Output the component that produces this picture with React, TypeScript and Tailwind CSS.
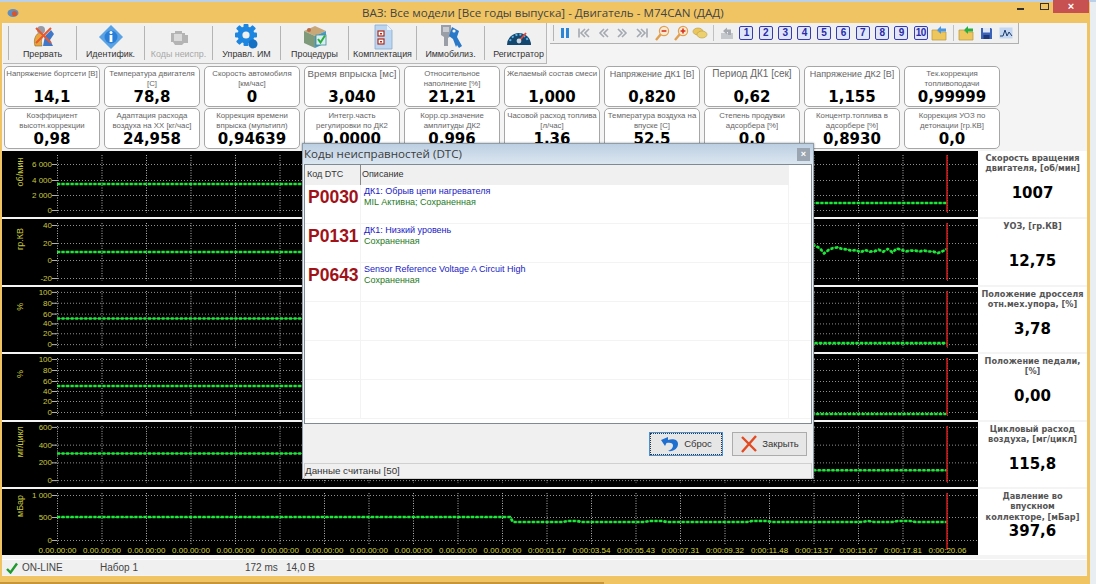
import React from 'react';

// one row of the chart stack: y ticks, unit and the trace as [x, y] points
interface ChartDef {
  unit: string;
  unitY: number;
  ticks: [string, number][];
  trace: [number, number][];
  title: string[];
  value: string;
}

const wave = [305, 312, 328, 318, 312, 310, 315, 316, 320, 318, 325, 318, 323, 322, 317, 323, 315, 325, 313, 318, 322, 320, 320, 322, 320, 322, 323, 327, 322, 315];

const charts: ChartDef[] = [
  {
    unit: 'об/мин', unitY: 21,
    ticks: [['6 000', 13], ['4 000', 29], ['2 000', 44], ['0', 59]],
    trace: [[55, 33], [540, 33], [545, 52], [945, 52]],
    title: ['Скорость вращения', 'двигателя, [об/мин]'], value: '1007',
  },
  {
    unit: 'гр.КВ', unitY: 20,
    ticks: [['40', 6], ['20', 24], ['0', 41], ['-20', 59]],
    trace: [[55, 33], [540, 33], ...wave.map((v, i): [number, number] => [813 + i * 4.55, v / 3 - 75])],
    title: ['УОЗ, [гр.КВ]'], value: '12,75',
  },
  {
    unit: '%', unitY: 20,
    ticks: [['100', 5], ['80', 16], ['60', 27], ['40', 37], ['20', 47], ['0', 58]],
    trace: [[55, 32], [540, 32], [545, 57], [945, 57]],
    title: ['Положение дросселя', 'отн.мех.упора, [%]'], value: '3,78',
  },
  {
    unit: '%', unitY: 20,
    ticks: [['100', 5], ['80', 16], ['60', 27], ['40', 37], ['20', 47], ['0', 58]],
    trace: [[55, 32], [540, 32], [545, 60], [945, 60]],
    title: ['Положение педали,', '[%]'], value: '0,00',
  },
  {
    unit: 'мг/цикл', unitY: 20,
    ticks: [['600', 5], ['400', 23], ['200', 41], ['0', 59]],
    trace: [[55, 32], [540, 32], [545, 49], [945, 49]],
    title: ['Цикловый расход', 'воздуха, [мг/цикл]'], value: '115,8',
  },
  {
    unit: 'мБар', unitY: 17,
    ticks: [['1 000', 6], ['500', 28], ['0', 51]],
    trace: [[55, 28], [508, 28], [511, 33], [560, 33], [566, 32], [575, 32], [580, 33], [642, 33], [648, 32], [660, 32], [665, 33], [745, 33], [750, 32], [765, 32], [770, 33], [860, 33], [866, 32], [872, 33], [890, 33], [896, 32], [908, 32], [914, 33], [945, 33]],
    title: ['Давление во', 'впускном', 'коллекторе, [мБар]'], value: '397,6',
  },
];

const timeLabels = [
  ...Array(11).fill('0.00.00:00'),
  '0:00:01.67', '0:00:03.54', '0:00:05.43', '0:00:07.31', '0:00:09.32', '0:00:11.48', '0:00:13.57', '0:00:15.67', '0:00:17.81', '0:00:20.06',
];

const gauges = [
  { label: 'Напряжение бортсети [В]', value: '14,1', size: 'text-[7.8px]' },
  { label: 'Температура двигателя [С]', value: '78,8', size: 'text-[7.8px]' },
  { label: 'Скорость автомобиля [км/час]', value: '0', size: 'text-[7.8px]' },
  { label: 'Время впрыска [мс]', value: '3,040', size: 'text-[9.7px]' },
  { label: 'Относительное наполнение [%]', value: '21,21', size: 'text-[7.8px]' },
  { label: 'Желаемый состав смеси', value: '1,000', size: 'text-[7.8px]' },
  { label: 'Напряжение ДК1 [В]', value: '0,820', size: 'text-[9px]' },
  { label: 'Период ДК1 [сек]', value: '0,62', size: 'text-[10px]' },
  { label: 'Напряжение ДК2 [В]', value: '1,155', size: 'text-[9px]' },
  { label: 'Тек.коррекция топливоподачи', value: '0,99999', size: 'text-[7.8px]' },
  { label: 'Коэффициент высотн.коррекции', value: '0,98', size: 'text-[7.8px]' },
  { label: 'Адаптация расхода воздуха на ХХ [кг/час]', value: '24,958', size: 'text-[7.8px]' },
  { label: 'Коррекция времени впрыска (мультипл)', value: '0,94639', size: 'text-[7.8px]' },
  { label: 'Интегр.часть\nрегулировки по ДК2', value: '0,0000', size: 'text-[7.8px]' },
  { label: 'Корр.ср.значение амплитуды ДК2', value: '0,996', size: 'text-[7.8px]' },
  { label: 'Часовой расход топлива [л/час]', value: '1,36', size: 'text-[7.8px]' },
  { label: 'Температура воздуха на впуске [С]', value: '52,5', size: 'text-[7.8px]' },
  { label: 'Степень продувки адсорбера [%]', value: '0,0', size: 'text-[7.8px]' },
  { label: 'Концентр.топлива в адсорбере [%]', value: '0,8930', size: 'text-[7.8px]' },
  { label: 'Коррекция УОЗ по детонации [гр.КВ]', value: '0,0', size: 'text-[7.8px]' },
];

const dtcRows = [
  { code: 'P0030', desc: 'ДК1: Обрыв цепи нагревателя', state: 'MIL Активна; Сохраненная' },
  { code: 'P0131', desc: 'ДК1: Низкий уровень', state: 'Сохраненная' },
  { code: 'P0643', desc: 'Sensor Reference Voltage A Circuit High', state: 'Сохраненная' },
  { code: '', desc: '', state: '' },
  { code: '', desc: '', state: '' },
  { code: '', desc: '', state: '' },
];

function Chart({ def, withTime }: { def: ChartDef; withTime: boolean }) {
  const pts = def.trace.map(([x, y]) => `${x},${y}`).join(' ');
  return (
    <svg className="block h-full w-[976px] bg-black" viewBox="0 0 976 66" preserveAspectRatio="none">
      {def.ticks.map(([label, y]) => (
        <g key={label}>
          <line x1="50" x2="976" y1={y + 0.5} y2={y + 0.5} stroke="#909090" strokeWidth="1" strokeDasharray="1 2" />
          <line x1="50" x2="55" y1={y + 0.5} y2={y + 0.5} stroke="#b0b0b0" strokeWidth="1" />
          <text x="50" y={y + 3} textAnchor="end" fontSize="8" fill="#c9c93c" fontFamily="Liberation Sans, sans-serif">{label}</text>
        </g>
      ))}
      {timeLabels.map((_, i) => (
        <line key={i} x1={55.5 + 44.5 * i} x2={55.5 + 44.5 * i} y1="4" y2={withTime ? 56 : 62} stroke="#b4b4b4" strokeWidth="1" strokeDasharray="1 1.5" />
      ))}
      <text transform={`translate(21 ${def.unitY}) rotate(-90)`} textAnchor="middle" fontSize="9" fill="#c9c93c" fontFamily="Liberation Sans, sans-serif">{def.unit}</text>
      <polyline points={pts} fill="none" stroke="#12b02a" strokeWidth="1" />
      <polyline points={pts} fill="none" stroke="#1de83a" strokeWidth="2.7" strokeDasharray="3 1.55" />
      <line x1="945" x2="945" y1="4" y2="61" stroke="#c81818" strokeWidth="1.6" />
      {withTime && timeLabels.map((t, i) => (
        <text key={i} x={55.5 + 44.5 * i} y="64" textAnchor="middle" fontSize="8" fill="#d6d63c" fontFamily="Liberation Sans, sans-serif">{t}</text>
      ))}
    </svg>
  );
}

function StopIcon() {
  return (
    <svg width="26" height="26" viewBox="0 0 26 26">
      <path d="M5 22 C3 15 6 10 10 8 L14 12 C11 14 11 18 12 22 Z" fill="#e8a53c" stroke="#8a6a30" strokeWidth=".6" />
      <path d="M13 22 L15 12 L21 6 L24 10 L20 16 L23 22 Z" fill="#3f78c8" />
      <circle cx="11" cy="6" r="4" fill="#9a9aa4" />
      <path d="M6 4 L21 19 M21 4 L6 19" stroke="#e8582c" strokeWidth="2" />
    </svg>
  );
}

function InfoIcon() {
  return (
    <svg width="26" height="26" viewBox="0 0 26 26">
      <path d="M13 1 L25 13 L13 25 L1 13 Z" fill="#5aa2e4" stroke="#9cc8ee" strokeWidth="1" />
      <circle cx="13" cy="13" r="6.5" fill="#2a80d8" />
      <circle cx="13" cy="8.5" r="1.5" fill="#fff" />
      <rect x="11.6" y="11" width="2.8" height="7" fill="#fff" />
    </svg>
  );
}

function EngineIcon() {
  return (
    <svg width="26" height="26" viewBox="0 0 26 26">
      <path d="M5 9 H9 V7 H16 V9 H19 V11 H22 V19 H18 L16 21 H9 L7 18 H5 Z" fill="#b4b4b4" />
      <rect x="8" y="10" width="8" height="7" fill="#dadada" />
    </svg>
  );
}

function GearIcon() {
  return (
    <svg width="28" height="28" viewBox="0 0 28 28">
      <g fill="#1c86e0">
        <circle cx="13" cy="12" r="8.5" />
        <rect x="10.5" y="1" width="5" height="5" rx="1" />
        <rect x="10.5" y="18" width="5" height="5" rx="1" />
        <rect x="2" y="9.5" width="5" height="5" rx="1" />
        <rect x="19" y="9.5" width="5" height="5" rx="1" />
        <rect x="4" y="3" width="5" height="5" rx="1" transform="rotate(45 6.5 5.5)" />
        <rect x="17" y="3" width="5" height="5" rx="1" transform="rotate(45 19.5 5.5)" />
        <rect x="4" y="16" width="5" height="5" rx="1" transform="rotate(45 6.5 18.5)" />
        <rect x="17" y="16" width="5" height="5" rx="1" transform="rotate(45 19.5 18.5)" />
        <circle cx="20" cy="21" r="4.5" fill="#1670c4" />
      </g>
      <circle cx="13" cy="12" r="3.6" fill="#f0f0f0" />
    </svg>
  );
}

function CubeIcon() {
  return (
    <svg width="26" height="26" viewBox="0 0 26 26">
      <path d="M13 2 L24 7 L13 12 L2 7 Z" fill="#c9a878" />
      <path d="M2 7 L13 12 V24 L2 19 Z" fill="#7f9a7a" />
      <path d="M24 7 L13 12 V24 L24 19 Z" fill="#4a9ac8" />
      <rect x="14" y="11" width="10" height="10" fill="#d8eef2" stroke="#3d8a9a" strokeWidth=".8" />
      <path d="M16 15 L18.5 18.5 L23 11.5" stroke="#2cae3c" strokeWidth="2" fill="none" />
      <circle cx="7" cy="6" r="2" fill="#b86a4a" />
    </svg>
  );
}

function ChecklistIcon() {
  return (
    <svg width="26" height="26" viewBox="0 0 26 26">
      <path d="M5 1 H17 L22 6 V25 H5 Z" fill="#bcd6f2" stroke="#8aa8cc" strokeWidth=".8" />
      <path d="M17 1 V6 H22 Z" fill="#eaf2fb" />
      <rect x="8" y="7" width="6" height="5" fill="#fff" stroke="#b02818" strokeWidth="1.2" />
      <rect x="8" y="15" width="6" height="5" fill="#fff" stroke="#b02818" strokeWidth="1.2" />
      <rect x="10" y="9" width="2" height="1.5" fill="#c0281a" />
      <rect x="10" y="17" width="2" height="1.5" fill="#c0281a" />
    </svg>
  );
}

function KeyIcon() {
  return (
    <svg width="26" height="28" viewBox="0 0 26 28">
      <path d="M3 2 H13 V13 L10 15 V23 H6 V14 L3 12 Z" fill="#9a9ea6" />
      <rect x="5" y="4" width="6" height="5" fill="#c8ccd2" />
      <path d="M14 4 L21 8 L19 14 L24 23 L21 25 L19 22 L18 24 L15 16 L11 13 Z" fill="#2a78c8" />
      <circle cx="16" cy="8" r="1.6" fill="#f0f0f0" />
    </svg>
  );
}

function DashIcon() {
  return (
    <svg width="28" height="26" viewBox="0 0 28 26">
      <path d="M2 21 A12 12 0 1 1 26 21 Z" fill="#14476e" />
      <path d="M5 17 A9.5 9.5 0 0 1 23 17" fill="none" stroke="#5fb4e8" strokeWidth="2" strokeDasharray="2 2" />
      <path d="M14 17 L21 9" stroke="#e0483c" strokeWidth="1.8" />
      <circle cx="14" cy="17" r="2.4" fill="#c9d6e0" />
    </svg>
  );
}

const mainButtons = [
  { label: 'Прервать', icon: <StopIcon /> },
  { label: 'Идентифик.', icon: <InfoIcon /> },
  { label: 'Коды неиспр.', icon: <EngineIcon />, off: true },
  { label: 'Управл. ИМ', icon: <GearIcon /> },
  { label: 'Процедуры', icon: <CubeIcon /> },
  { label: 'Комплектация', icon: <ChecklistIcon /> },
  { label: 'Иммобилиз.', icon: <KeyIcon /> },
  { label: 'Регистратор', icon: <DashIcon /> },
];

function Small({ children }: { children: React.ReactNode }) {
  return <div className="flex w-[19.4px] shrink-0 items-center justify-center">{children}</div>;
}

function Nav({ dir, bar }: { dir: 1 | -1; bar?: boolean }) {
  const t = dir === 1 ? '' : 'scale(-1 1) translate(-14 0)';
  return (
    <svg width="14" height="14" viewBox="0 0 14 14">
      <g transform={t} fill="none" stroke="#a4a8b0" strokeWidth="1.6">
        <path d="M2 3 L6 7 L2 11 M6 3 L10 7 L6 11" />
        {bar && <path d="M12 2.5 V11.5" />}
      </g>
    </svg>
  );
}

function Zoomer({ plus }: { plus?: boolean }) {
  return (
    <svg width="16" height="16" viewBox="0 0 16 16">
      <path d="M7 9 L2 15" stroke="#e0a050" strokeWidth="2.4" />
      <circle cx="10" cy="6" r="4.6" fill="#fbe9d0" stroke="#e0a050" strokeWidth="1.2" />
      <path d="M7.6 6 H12.4" stroke="#d83020" strokeWidth="1.6" />
      {plus && <path d="M10 3.6 V8.4" stroke="#d83020" strokeWidth="1.6" />}
    </svg>
  );
}

function Folder({ arrow }: { arrow: string }) {
  return (
    <svg width="18" height="16" viewBox="0 0 18 16">
      <path d="M1 5 H6 L7.5 7 H15 V15 H1 Z" fill="#edc75e" stroke="#b8953a" strokeWidth=".7" />
      <path d="M6 5 L10 1 V3.5 H15 V6.5 H10 V9 Z" fill={arrow} />
    </svg>
  );
}

function Dialog() {
  return (
    <div className="absolute left-[302px] top-[143px] flex h-[336px] w-[512px] flex-col border border-[#8f9dab] bg-[#f0f0f0] shadow-[0_0_2px_rgba(0,0,0,0.4)]">
      <div className="flex h-[20px] shrink-0 items-center justify-between bg-gradient-to-b from-[#bccfe2] to-[#dbe6f0] pl-[1px] pr-[3px]">
        <span className="text-[11.6px] font-['Open_Sans',sans-serif] text-[#3c3c3c]">Коды неисправностей (DTC)</span>
        <div className="flex h-[13px] w-[13px] items-center justify-center bg-[#9aa5b1] text-[9px] font-bold leading-none text-white">×</div>
      </div>
      <div className="mx-[1px] flex h-[260px] shrink-0 flex-col overflow-hidden border border-[#7f8a95] bg-white">
        <div className="grid h-[20px] shrink-0 grid-cols-[56px_428px_1fr] text-[9px] text-[#333]">
          <div className="flex items-center border-r border-[#8a8a8a] bg-[#f0f0f0] pl-[2px]">Код DTC</div>
          <div className="flex items-center bg-[#f0f0f0] pl-[1px]">Описание</div>
          <div />
        </div>
        {dtcRows.map((r, i) => (
          <div key={i} className="grid h-[39px] shrink-0 grid-cols-[56px_428px_1fr] border-b border-[#f3f3f3]">
            <div className="border-r border-[#f3f3f3] pl-[3px] pt-[2px] font-['Liberation_Sans',sans-serif] text-[17.5px] font-bold leading-[20px] text-[#a01218]">{r.code}</div>
            <div className="border-r border-[#f3f3f3] pt-[1px] text-[9px] leading-[10.5px]">
              <div className="pl-[3px] text-[#2020c4]">{r.desc}</div>
              <div className="pl-[3px] text-[#1d7a24]">{r.state}</div>
            </div>
            <div />
          </div>
        ))}
      </div>
      <div className="flex h-[39px] shrink-0 items-start justify-end gap-[9px] pr-[6px] pt-[8px]">
        <div className="flex h-[24px] w-[74px] items-center justify-center gap-[4px] border border-[#4a90d8] bg-[#e6e6e6] text-[9.5px] text-[#333] outline-1 -outline-offset-2 outline-dotted outline-[#333]">
          <svg width="20" height="18" viewBox="0 0 20 18">
            <path d="M8 2 L1 5 L5 11 L6.5 8 C10 7 13.5 8 13 11 C12.7 13 11 15 8 16 C14 17 18 13 18 9 C18 4 12 3.5 8 5 Z" fill="#1f6fd0" />
          </svg>
          Сброс
        </div>
        <div className="flex h-[24px] w-[75px] items-center justify-center gap-[4px] border border-[#acacac] bg-[#e6e6e6] text-[9.5px] text-[#333]">
          <svg width="18" height="18" viewBox="0 0 18 18">
            <path d="M2 2 L16 16 M16 1 L2 17" stroke="#e24a22" strokeWidth="2.4" />
          </svg>
          Закрыть
        </div>
      </div>
      <div className="mx-[1px] flex h-[16px] shrink-0 items-center border border-[#d0d0d0] bg-[#f0f0f0] text-[9.8px] text-[#333]">Данные считаны [50]</div>
    </div>
  );
}

export default function App() {
  return (
    <div className="relative flex h-[584px] w-[1096px] flex-col overflow-hidden bg-[#e9eef3] font-['Liberation_Sans',sans-serif]">
      <div className="h-[2px] shrink-0 bg-[#b9d0e8]" />

      <div className="flex min-h-0 w-[1090px] flex-1 flex-col bg-[#f0c463]">
        <div className="relative flex h-[21px] shrink-0 items-center">
          <svg className="ml-[7px]" width="12" height="10" viewBox="0 0 12 10">
            <ellipse cx="6" cy="5" rx="5.5" ry="4" fill="#5f8fc0" />
            <circle cx="7.5" cy="5.5" r="2.6" fill="#d8542c" />
          </svg>
          <span className="ml-[343px] font-['Open_Sans',sans-serif] text-[11.6px] text-[#444]">ВАЗ: Все модели [Все годы выпуска] - Двигатель - M74CAN (ДАД)</span>
          <div className="absolute right-[1px] top-0 flex items-start">
            <div className="mr-[16px] mt-[6px] h-[2px] w-[7px] bg-[#333]" />
            <div className="mr-[4px] mt-[1px] h-[7px] w-[9px] border border-[#333]" />
            <div className="-mt-[2px] flex h-[13px] w-[36px] items-center justify-center bg-[#c75050] text-[11px] font-bold leading-none text-white">×</div>
          </div>
        </div>

        <div className="ml-[2px] mr-[3px] flex min-h-0 flex-1 flex-col bg-[#f4f4f4]">
          {/* toolbars */}
          <div className="flex h-[43px] shrink-0 items-start">
            <div className="ml-[1px] flex h-[41px] w-[544px] items-center border-b border-r border-[#b8b8b8] bg-[#f0f0f0] pl-[5px]">
              {mainButtons.map((b) => (
                <div key={b.label} className="flex h-[34px] w-[68px] shrink-0 flex-col items-center justify-between border-l border-[#b4b4b4]">
                  <div className="flex h-[22px] items-center">{b.icon}</div>
                  <span className={`whitespace-nowrap text-[8.9px] leading-[11px] ${b.off ? 'text-[#a8a8a8]' : 'text-[#333]'}`}>{b.label}</span>
                </div>
              ))}
            </div>
            <div className="ml-[3px] flex h-[21px] w-[469px] items-center border-b border-r border-[#b0b0b0] bg-[#f0f0f0] pl-[3px]">
              <div className="h-[16px] w-[2px] shrink-0 border-l border-[#b4b4b4]" />
              <Small>
                <svg width="10" height="12" viewBox="0 0 10 12"><rect x="1" y="1" width="3" height="10" fill="#2c86d8" /><rect x="6" y="1" width="3" height="10" fill="#2c86d8" /></svg>
              </Small>
              <Small><Nav dir={-1} bar /></Small>
              <Small><Nav dir={-1} /></Small>
              <Small><Nav dir={1} /></Small>
              <Small><Nav dir={1} bar /></Small>
              <Small><Zoomer /></Small>
              <Small><Zoomer plus /></Small>
              <Small>
                <svg width="16" height="12" viewBox="0 0 16 12"><ellipse cx="6" cy="4.5" rx="5" ry="3.5" fill="#eac65c" stroke="#b89a40" strokeWidth=".6" /><ellipse cx="10" cy="7.5" rx="5" ry="3.5" fill="#ecd070" stroke="#b89a40" strokeWidth=".6" /></svg>
              </Small>
              <div className="flex h-[16px] w-[7px] shrink-0 justify-center"><div className="w-px bg-[#c0c0c0]" /></div>
              <Small>
                <svg width="14" height="14" viewBox="0 0 14 14"><rect x="1" y="7" width="12" height="6" fill="#c4c8cc" /><path d="M3 5 L7 1.5 V3.5 H11 V9 H8 V6 H7 V8.5 Z" fill="#a6aab0" /></svg>
              </Small>
              {['1', '2', '3', '4', '5', '6', '7', '8', '9', '10'].map((n) => (
                <Small key={n}>
                  <div className="flex h-[14px] w-[14px] items-center justify-center rounded-[2px] border border-[#3a3ab0] bg-[#dfe6f7] text-[10px] font-bold leading-none tracking-[-0.5px] text-[#2a2aa8]">{n}</div>
                </Small>
              ))}
              <Small><Folder arrow="#4a96e0" /></Small>
              <div className="flex h-[16px] w-[7.5px] shrink-0 justify-center"><div className="w-px bg-[#c0c0c0]" /></div>
              <Small><Folder arrow="#2cae3c" /></Small>
              <Small>
                <svg width="13" height="13" viewBox="0 0 13 13"><path d="M1 1 H11 L12 2 V12 H1 Z" fill="#3a62b8" /><rect x="3" y="1" width="7" height="4.5" fill="#dfe6f7" /><rect x="3.5" y="8" width="6" height="4" fill="#1c3878" /></svg>
              </Small>
              <Small>
                <svg width="14" height="12" viewBox="0 0 14 12"><rect x="0.5" y="0.5" width="13" height="11" fill="#c4d6f0" /><path d="M1 9 L4 9 L6 3 L8 9 L10 5 L13 9" fill="none" stroke="#1c3c6c" strokeWidth="1" /></svg>
              </Small>
            </div>
          </div>

          {/* gauges */}
          <div className="grid shrink-0 grid-cols-[repeat(10,96px)] gap-x-[4px] gap-y-[1px] pl-[2px]">
            {gauges.map((g) => (
              <div key={g.label} className="flex h-[41px] flex-col items-center justify-between overflow-hidden rounded-[5px] border border-[#a6a6a6] bg-white">
                <div className={`whitespace-pre-line pt-[2px] text-center leading-[10px] text-[#666] ${g.size}`}>{g.label}</div>
                <div className="font-['DejaVu_Sans',sans-serif] text-[15px] font-bold leading-[17px] text-black">{g.value}</div>
              </div>
            ))}
          </div>

          {/* charts and live values */}
          <div className="mt-[2px] grid shrink-0 grid-cols-[976px_109px] grid-rows-[66px_66px_65px_66px_65px_66px] gap-y-[2px]">
            {charts.map((c, i) => (
              <React.Fragment key={c.title[0]}>
                <Chart def={c} withTime={i === charts.length - 1} />
                <div className="bg-white text-center font-['DejaVu_Sans',sans-serif]">
                  <div className="h-[33px] pt-[2px] text-[8.2px] font-bold leading-[10.3px] text-[#555]">
                    {c.title.map((t) => <div key={t} className="whitespace-nowrap">{t}</div>)}
                  </div>
                  <div className="text-[15px] font-bold leading-[18px] text-black">{c.value}</div>
                </div>
              </React.Fragment>
            ))}
          </div>

          {/* status bar */}
          <div className="mt-[4px] flex h-[16px] shrink-0 items-center border-t border-[#fff] bg-[#f0f0f0] text-[10px] text-[#444]">
            <svg className="ml-[4px]" width="12" height="12" viewBox="0 0 12 12"><path d="M1 7 L4.5 10.5 L11 1.5" fill="none" stroke="#1f9a2e" strokeWidth="2.4" /></svg>
            <span className="ml-[4px] w-[78px]">ON-LINE</span>
            <span className="w-[145px]">Набор 1</span>
            <span className="w-[41px]">172 ms</span>
            <span>14,0 В</span>
          </div>
        </div>

        <div className="flex h-[8px] shrink-0 flex-col justify-end">
          <div className="h-[2px] w-[604px] bg-[#c8963a]" />
        </div>
      </div>

      <Dialog />
    </div>
  );
}
